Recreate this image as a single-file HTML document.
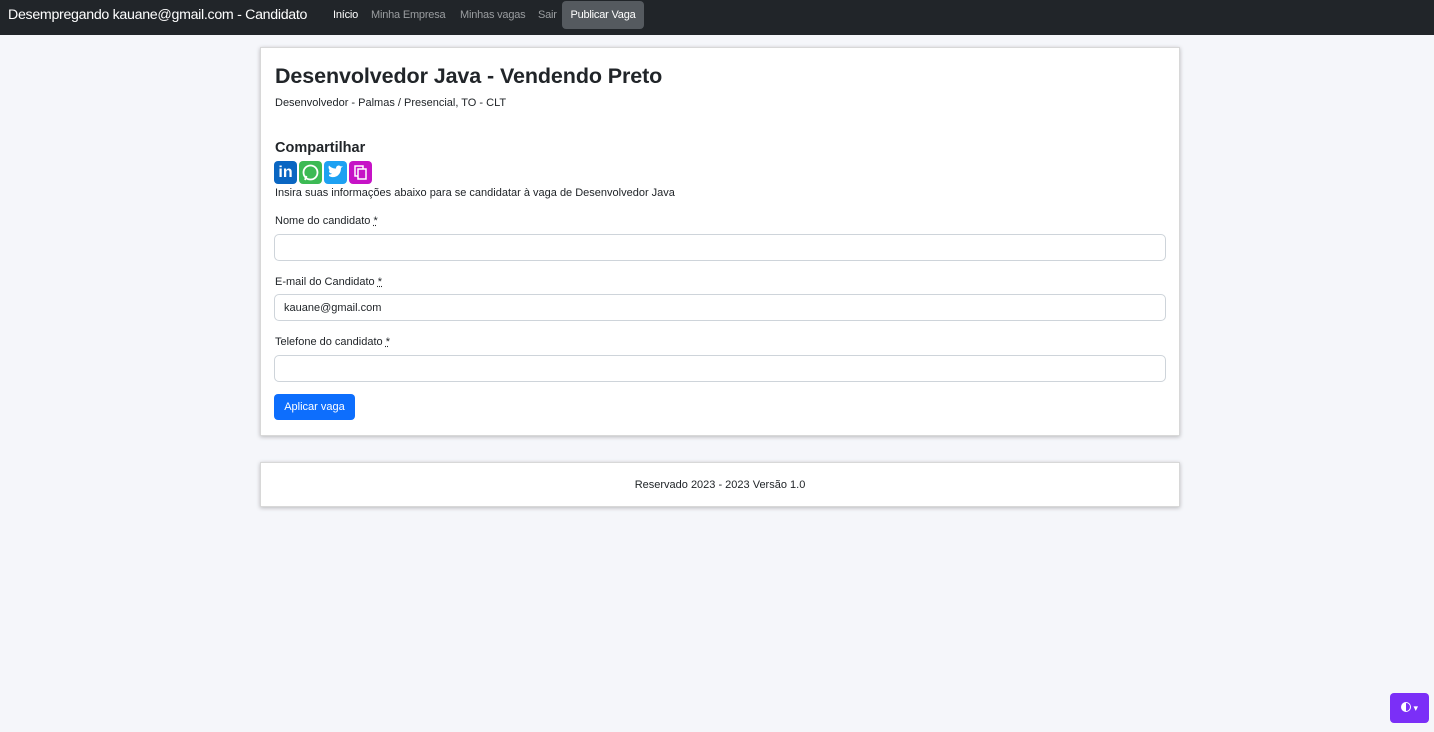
<!DOCTYPE html>
<html><head><meta charset="utf-8"><style>
*{box-sizing:border-box;margin:0;padding:0}
body{width:1434px;height:732px;background:#f5f6fa;font-family:"Liberation Sans",sans-serif;color:#212529;position:relative;overflow:hidden}
.nav{height:35px;background:#212529;position:relative;font-size:11px}
.nav span,.nav a{position:absolute;top:0;line-height:31px;white-space:nowrap;text-decoration:none}
.brand{color:#fff;font-size:14.2px;left:8px;letter-spacing:-0.3px}
.nav a{color:#9a9da0;letter-spacing:-0.2px}
.nav a.act{color:#fff}
.pub{background:#555a5f;color:#fff;height:28px;top:1px!important;line-height:28px!important;left:562px;width:82px;text-align:center;border-radius:4px;font-size:11px;letter-spacing:-0.2px}
.card{position:absolute;left:260px;width:920px;background:#fff;border:1px solid #d8d8d8;box-shadow:0 1px 4px rgba(0,0,0,.25)}
h1{font-size:21.5px;font-weight:bold;position:absolute;left:14px;top:16px;letter-spacing:-0.1px}
.t{position:absolute;left:14px;font-size:11px}
h2{position:absolute;left:14px;top:92px;font-size:14.5px;font-weight:bold}
.ic{position:absolute;top:113px;width:23px;height:23px;border-radius:4px}
.in{position:absolute;left:13px;width:892px;height:27px;border:1px solid #ced4da;border-radius:5px;font-size:11px;padding:7px 9px}
.btn{position:absolute;left:13px;top:346px;width:81px;height:26px;background:#0d6efd;color:#fff;border-radius:4px;font-size:11px;text-align:center;line-height:27px}
u{text-decoration:underline dotted}
</style></head><body>
<div class="nav"><span class="brand">Desempregando kauane@gmail.com - Candidato</span><a class="act" style="left:333px">Início</a><a style="left:371px">Minha Empresa</a><a style="left:460px">Minhas vagas</a><a style="left:538px">Sair</a><span class="pub">Publicar Vaga</span></div>
<div class="card" style="top:47px;height:389px">
<h1>Desenvolvedor Java - Vendendo Preto</h1>
<div class="t" style="top:49px">Desenvolvedor - Palmas / Presencial, TO - CLT</div>
<h2>Compartilhar</h2>
<div class="ic" style="left:13px;background:#0a66c2;color:#fff;font-weight:bold;font-size:16px;text-align:center;line-height:23px">in</div>
<div class="ic" style="left:38px;background:#3cba54"><svg width="23" height="23" viewBox="0 0 23 23"><circle cx="11.5" cy="11.5" r="7" fill="none" stroke="#fff" stroke-width="1.8"/><path d="M6 19l1.5-4" stroke="#fff" stroke-width="1.8"/></svg></div>
<div class="ic" style="left:63px;background:#1da1f2"><svg width="23" height="23" viewBox="0 0 23 23"><path d="M5 15c5 3 12 0 12-8l2-2-2 .5c-2-2-5-1-5 2-3 0-5-1-7-3-1 2 0 4 1 5l-1 0c0 2 1 3 3 3-1 1-2 1-3 1z" fill="#fff"/></svg></div>
<div class="ic" style="left:88px;background:#c613c6"><svg width="23" height="23" viewBox="0 0 23 23"><rect x="6" y="5" width="8" height="10" fill="none" stroke="#fff" stroke-width="1.5"/><rect x="9" y="8" width="8" height="10" fill="#c613c6" stroke="#fff" stroke-width="1.5"/></svg></div>
<div class="t" style="top:139px">Insira suas informações abaixo para se candidatar à vaga de Desenvolvedor Java</div>
<div class="t" style="top:167px">Nome do candidato <u>*</u></div>
<div class="in" style="top:186px"></div>
<div class="t" style="top:228px">E-mail do Candidato <u>*</u></div>
<div class="in" style="top:246px">kauane@gmail.com</div>
<div class="t" style="top:288px">Telefone do candidato <u>*</u></div>
<div class="in" style="top:307px"></div>
<div class="btn">Aplicar vaga</div>
</div>
<div class="card" style="top:462px;height:45px;text-align:center;font-size:11px;line-height:45px">Reservado 2023 - 2023 Versão 1.0</div>
<div style="position:absolute;left:1390px;top:693px;width:39px;height:30px;background:#7b2ff7;border-radius:4px;color:#fff;font-size:9px;line-height:30px;text-align:center"><span style="display:inline-block;width:10px;height:10px;border-radius:50%;border:1.5px solid #fff;background:linear-gradient(90deg,#fff 50%,transparent 50%);vertical-align:-1px"></span> ▾</div>
</body></html>
